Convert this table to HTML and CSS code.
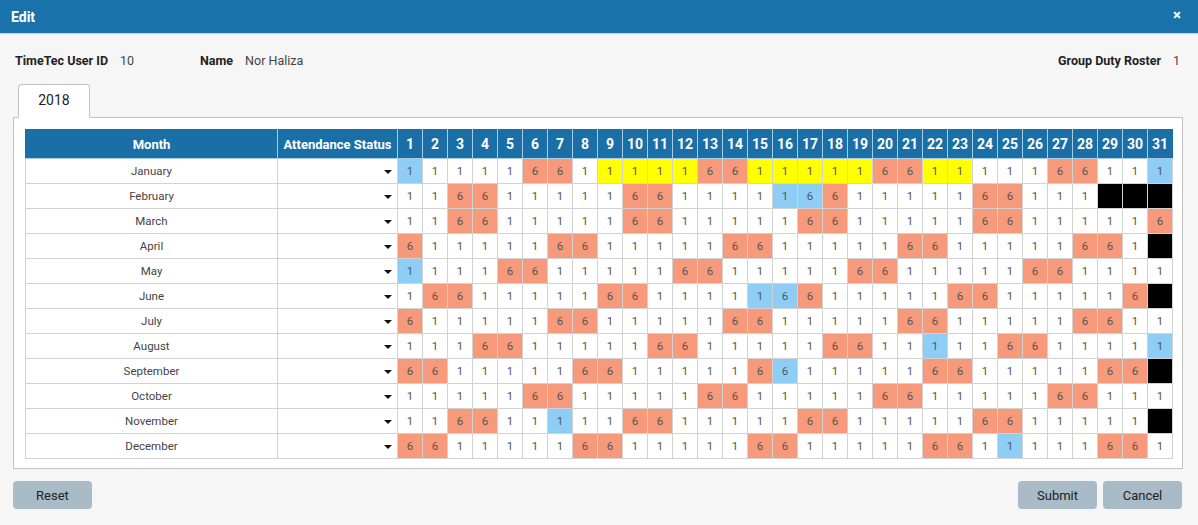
FILE: index.html
```html
<!DOCTYPE html>
<html>
<head>
<meta charset="utf-8">
<link rel="stylesheet" href="styles.css">
</head>
<body>
<div class="modal">
  <div class="titlebar"><span class="title">Edit</span><span class="close">&#215;</span></div>
  <div class="content">
    <div class="info">
      <div class="field uid"><span class="lbl">TimeTec User ID</span><span class="val">10</span></div>
      <div class="field name"><span class="lbl">Name</span><span class="val">Nor Haliza</span></div>
      <div class="field roster"><span class="lbl">Group Duty Roster</span><span class="val">1</span></div>
    </div>
    <div class="tabs"><div class="tab">2018</div></div>
    <div class="panel">
      <table class="grid">
        <colgroup><col class="c-month"><col class="c-att"><col span="31" class="c-day"></colgroup>
        <thead>
          <tr><th>Month</th><th>Attendance Status</th><th>1</th><th>2</th><th>3</th><th>4</th><th>5</th><th>6</th><th>7</th><th>8</th><th>9</th><th>10</th><th>11</th><th>12</th><th>13</th><th>14</th><th>15</th><th>16</th><th>17</th><th>18</th><th>19</th><th>20</th><th>21</th><th>22</th><th>23</th><th>24</th><th>25</th><th>26</th><th>27</th><th>28</th><th>29</th><th>30</th><th>31</th></tr>
        </thead>
        <tbody>
          <tr><td class="m">January</td><td class="att"><span class="arrow"></span></td><td class="b">1</td><td>1</td><td>1</td><td>1</td><td>1</td><td class="o">6</td><td class="o">6</td><td>1</td><td class="y">1</td><td class="y">1</td><td class="y">1</td><td class="y">1</td><td class="o">6</td><td class="o">6</td><td class="y">1</td><td class="y">1</td><td class="y">1</td><td class="y">1</td><td class="y">1</td><td class="o">6</td><td class="o">6</td><td class="y">1</td><td class="y">1</td><td>1</td><td>1</td><td>1</td><td class="o">6</td><td class="o">6</td><td>1</td><td>1</td><td class="b">1</td></tr>
          <tr><td class="m">February</td><td class="att"><span class="arrow"></span></td><td>1</td><td>1</td><td class="o">6</td><td class="o">6</td><td>1</td><td>1</td><td>1</td><td>1</td><td>1</td><td class="o">6</td><td class="o">6</td><td>1</td><td>1</td><td>1</td><td>1</td><td class="b">1</td><td class="b">6</td><td class="o">6</td><td>1</td><td>1</td><td>1</td><td>1</td><td>1</td><td class="o">6</td><td class="o">6</td><td>1</td><td>1</td><td>1</td><td class="k"></td><td class="k"></td><td class="k"></td></tr>
          <tr><td class="m">March</td><td class="att"><span class="arrow"></span></td><td>1</td><td>1</td><td class="o">6</td><td class="o">6</td><td>1</td><td>1</td><td>1</td><td>1</td><td>1</td><td class="o">6</td><td class="o">6</td><td>1</td><td>1</td><td>1</td><td>1</td><td>1</td><td class="o">6</td><td class="o">6</td><td>1</td><td>1</td><td>1</td><td>1</td><td>1</td><td class="o">6</td><td class="o">6</td><td>1</td><td>1</td><td>1</td><td>1</td><td>1</td><td class="o">6</td></tr>
          <tr><td class="m">April</td><td class="att"><span class="arrow"></span></td><td class="o">6</td><td>1</td><td>1</td><td>1</td><td>1</td><td>1</td><td class="o">6</td><td class="o">6</td><td>1</td><td>1</td><td>1</td><td>1</td><td>1</td><td class="o">6</td><td class="o">6</td><td>1</td><td>1</td><td>1</td><td>1</td><td>1</td><td class="o">6</td><td class="o">6</td><td>1</td><td>1</td><td>1</td><td>1</td><td>1</td><td class="o">6</td><td class="o">6</td><td>1</td><td class="k"></td></tr>
          <tr><td class="m">May</td><td class="att"><span class="arrow"></span></td><td class="b">1</td><td>1</td><td>1</td><td>1</td><td class="o">6</td><td class="o">6</td><td>1</td><td>1</td><td>1</td><td>1</td><td>1</td><td class="o">6</td><td class="o">6</td><td>1</td><td>1</td><td>1</td><td>1</td><td>1</td><td class="o">6</td><td class="o">6</td><td>1</td><td>1</td><td>1</td><td>1</td><td>1</td><td class="o">6</td><td class="o">6</td><td>1</td><td>1</td><td>1</td><td>1</td></tr>
          <tr><td class="m">June</td><td class="att"><span class="arrow"></span></td><td>1</td><td class="o">6</td><td class="o">6</td><td>1</td><td>1</td><td>1</td><td>1</td><td>1</td><td class="o">6</td><td class="o">6</td><td>1</td><td>1</td><td>1</td><td>1</td><td class="b">1</td><td class="b">6</td><td class="o">6</td><td>1</td><td>1</td><td>1</td><td>1</td><td>1</td><td class="o">6</td><td class="o">6</td><td>1</td><td>1</td><td>1</td><td>1</td><td>1</td><td class="o">6</td><td class="k"></td></tr>
          <tr><td class="m">July</td><td class="att"><span class="arrow"></span></td><td class="o">6</td><td>1</td><td>1</td><td>1</td><td>1</td><td>1</td><td class="o">6</td><td class="o">6</td><td>1</td><td>1</td><td>1</td><td>1</td><td>1</td><td class="o">6</td><td class="o">6</td><td>1</td><td>1</td><td>1</td><td>1</td><td>1</td><td class="o">6</td><td class="o">6</td><td>1</td><td>1</td><td>1</td><td>1</td><td>1</td><td class="o">6</td><td class="o">6</td><td>1</td><td>1</td></tr>
          <tr><td class="m">August</td><td class="att"><span class="arrow"></span></td><td>1</td><td>1</td><td>1</td><td class="o">6</td><td class="o">6</td><td>1</td><td>1</td><td>1</td><td>1</td><td>1</td><td class="o">6</td><td class="o">6</td><td>1</td><td>1</td><td>1</td><td>1</td><td>1</td><td class="o">6</td><td class="o">6</td><td>1</td><td>1</td><td class="b">1</td><td>1</td><td>1</td><td class="o">6</td><td class="o">6</td><td>1</td><td>1</td><td>1</td><td>1</td><td class="b">1</td></tr>
          <tr><td class="m">September</td><td class="att"><span class="arrow"></span></td><td class="o">6</td><td class="o">6</td><td>1</td><td>1</td><td>1</td><td>1</td><td>1</td><td class="o">6</td><td class="o">6</td><td>1</td><td>1</td><td>1</td><td>1</td><td>1</td><td class="o">6</td><td class="b">6</td><td>1</td><td>1</td><td>1</td><td>1</td><td>1</td><td class="o">6</td><td class="o">6</td><td>1</td><td>1</td><td>1</td><td>1</td><td>1</td><td class="o">6</td><td class="o">6</td><td class="k"></td></tr>
          <tr><td class="m">October</td><td class="att"><span class="arrow"></span></td><td>1</td><td>1</td><td>1</td><td>1</td><td>1</td><td class="o">6</td><td class="o">6</td><td>1</td><td>1</td><td>1</td><td>1</td><td>1</td><td class="o">6</td><td class="o">6</td><td>1</td><td>1</td><td>1</td><td>1</td><td>1</td><td class="o">6</td><td class="o">6</td><td>1</td><td>1</td><td>1</td><td>1</td><td>1</td><td class="o">6</td><td class="o">6</td><td>1</td><td>1</td><td>1</td></tr>
          <tr><td class="m">November</td><td class="att"><span class="arrow"></span></td><td>1</td><td>1</td><td class="o">6</td><td class="o">6</td><td>1</td><td>1</td><td class="b">1</td><td>1</td><td>1</td><td class="o">6</td><td class="o">6</td><td>1</td><td>1</td><td>1</td><td>1</td><td>1</td><td class="o">6</td><td class="o">6</td><td>1</td><td>1</td><td>1</td><td>1</td><td>1</td><td class="o">6</td><td class="o">6</td><td>1</td><td>1</td><td>1</td><td>1</td><td>1</td><td class="k"></td></tr>
          <tr><td class="m">December</td><td class="att"><span class="arrow"></span></td><td class="o">6</td><td class="o">6</td><td>1</td><td>1</td><td>1</td><td>1</td><td>1</td><td class="o">6</td><td class="o">6</td><td>1</td><td>1</td><td>1</td><td>1</td><td>1</td><td class="o">6</td><td class="o">6</td><td>1</td><td>1</td><td>1</td><td>1</td><td>1</td><td class="o">6</td><td class="o">6</td><td>1</td><td class="b">1</td><td>1</td><td>1</td><td>1</td><td class="o">6</td><td class="o">6</td><td>1</td></tr>
        </tbody>
      </table>
    </div>
    <div class="actions">
      <button class="btn">Reset</button>
      <div class="right">
        <button class="btn">Submit</button>
        <button class="btn">Cancel</button>
      </div>
    </div>
  </div>
</div>
</body>
</html>
```
FILE: styles.css
```css
html, body {
  margin: 0;
  padding: 0;
}
body {
  width: 1198px;
  height: 525px;
  background: #f6f6f6;
  font-family: Roboto, "Liberation Sans", sans-serif;
  color: #333;
  overflow: hidden;
}
.titlebar {
  height: 33px;
  background: #1a72aa;
  border-bottom: 1px solid #b9d3e6;
  display: flex;
  align-items: center;
  justify-content: space-between;
  padding: 0 17px 0 11px;
}
.title {
  color: #fff;
  font-weight: bold;
  font-size: 14px;
}
.close {
  color: #fff;
  font-weight: bold;
  font-size: 15px;
  margin-top: -3px;
}
.content {
  padding: 18px 15px 0 13px;
}
.info {
  display: flex;
  align-items: center;
  height: 16px;
  padding-left: 2px;
  font-size: 12.5px;
}
.field {
  display: flex;
  gap: 12px;
}
.uid {
  min-width: 185px;
}
.lbl {
  font-weight: bold;
  color: #222;
}
.val {
  color: #444;
}
.roster {
  margin-left: auto;
  padding-right: 3px;
}
.tabs {
  display: flex;
  margin-top: 16px;
  padding-left: 5px;
}
.tab {
  position: relative;
  z-index: 1;
  width: 70px;
  height: 32px;
  line-height: 31px;
  text-align: center;
  background: #fff;
  border: 1px solid #c3c3c3;
  border-bottom-color: #fff;
  border-radius: 4px 4px 0 0;
  margin-bottom: -1px;
  font-size: 14px;
  color: #222;
}
.panel {
  background: #fff;
  border: 1px solid #c3c3c3;
  padding: 11px 10px 9px 11px;
}
.grid {
  border-collapse: collapse;
  table-layout: fixed;
  width: 1147px;
}
.c-month { width: 252px; }
.c-att { width: 120px; }
.c-day { width: 25px; }
.grid th {
  background: #1a6fa7;
  color: #fff;
  font-weight: bold;
  font-size: 13px;
  height: 28px;
  padding: 0;
  border: 1px solid #a9cde6;
  border-top-color: #1a6fa7;
  text-align: center;
}
.grid th:first-child { border-left-color: #1a6fa7; }
.grid th:last-child { border-right-color: #1a6fa7; }
.grid th:nth-child(n+3) {
  font-size: 14px;
}
.grid td {
  height: 24px;
  padding: 0;
  border: 1px solid #d2d2d2;
  text-align: center;
  font-size: 11.5px;
  color: #555;
  background: #fff;
}
.grid td.m {
  color: #444;
}
.grid td.att {
  text-align: right;
  padding-right: 5px;
}
.arrow {
  display: inline-block;
  width: 0;
  height: 0;
  border-left: 4px solid transparent;
  border-right: 4px solid transparent;
  border-top: 4px solid #111;
  vertical-align: middle;
}
.grid td.o { background: #f7997b; }
.grid td.b { background: #8ecdf6; }
.grid td.y { background: #ffff00; }
.grid td.k { background: #000; }
.actions {
  display: flex;
  justify-content: space-between;
  margin-top: 12px;
}
.right {
  display: flex;
  gap: 6px;
  margin-right: 1px;
}
.btn {
  width: 79px;
  height: 28px;
  border: none;
  border-radius: 4px;
  background: #a8bbc7;
  color: #222;
  font-family: Roboto, "Liberation Sans", sans-serif;
  font-size: 13px;
  padding: 0;
}
```
